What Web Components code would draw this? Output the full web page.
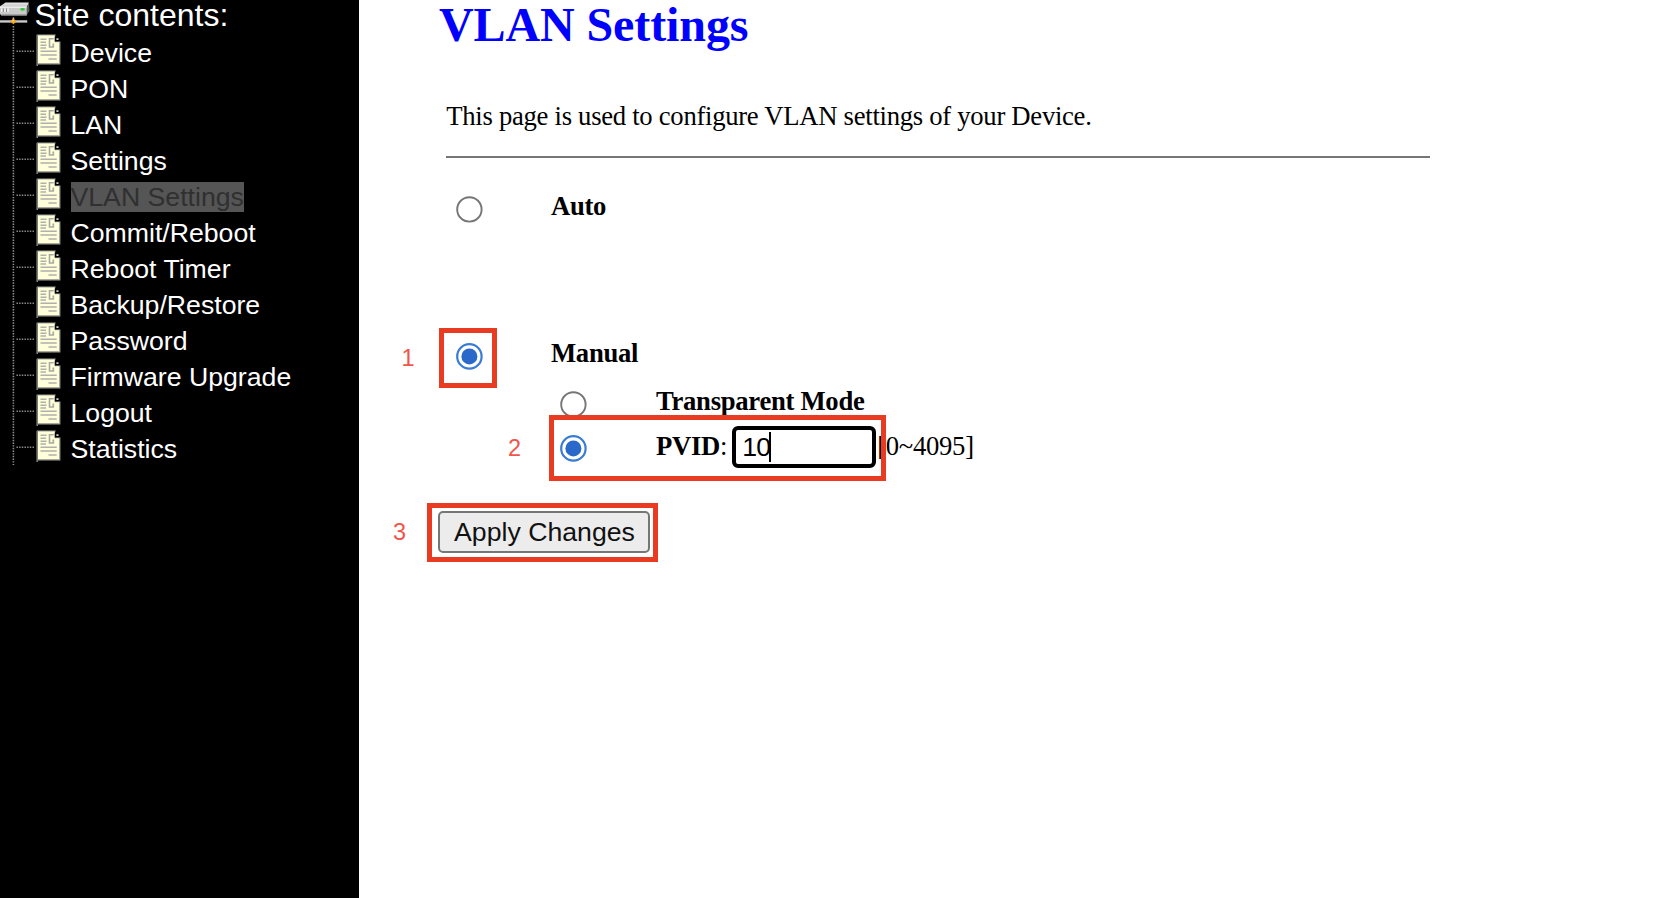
<!DOCTYPE html>
<html lang="en">
<head>
<meta charset="utf-8">
<title>VLAN Settings</title>
<style>
    html, body {
        margin: 0;
        height: 100%;
        overflow: hidden;
        background: #fff;
    }
</style>
</head>
<body>
<device-page></device-page>

<script>
class TreeItem extends HTMLElement {
    connectedCallback() {
        this.attachShadow({ mode: 'open' });
        this.shadowRoot.innerHTML = `
            <style>
                :host {
                    display: flex;
                    height: 36px;
                    line-height: 36px;
                    font-size: 26.67px;
                    white-space: nowrap;
                }

                svg {
                    flex: none;
                    width: 70.5px;
                    height: 36px;
                    overflow: visible;
                }

                :host([active]) span {
                    background: #555;
                    color: #303030;
                }
            </style>
            <svg viewBox="0 0 70.5 36">
                <path d="M16.5 16.3H35" fill="none" stroke="#909090" stroke-width="1.6" stroke-dasharray="1.4 1.27"/>
                <path d="M37.3 31V0H55.2V6.6H59.8V28.8H37.3" fill="#ffffd9" stroke="#a0a09c" stroke-width="1.2"/>
                <path d="M37.2 0V30.8" stroke="#77776f" stroke-width="1.3"/>
                <path d="M55.8-.8L60.8 5V6.4H54.8V2.5Z" fill="#000"/>
                <path d="M56.4 4.1H58.5" stroke="#e5e5d8" stroke-width="1.6"/>
                <path d="M40.5 4.2H46.5M40.5 7.2H46M40.5 10.2H46.5M40.5 13H46M40.5 16.2H56.7M40.5 20H56.7M48.5 24H56.7" stroke="#b0b0ac" stroke-width="1.6"/>
                <path d="M53.7 3.8H49.5V12H53.3V8.5" fill="none" stroke="#a9a9a4" stroke-width="1.6"/>
            </svg>
            <div><span><slot></slot></span></div>
        `;
    }
}

class SiteTree extends HTMLElement {
    connectedCallback() {
        this.attachShadow({ mode: 'open' });
        this.shadowRoot.innerHTML = `
            <style>
                :host {
                    display: block;
                    position: relative;
                    flex: none;
                    width: 358.6px;
                    background: #000;
                    color: #fff;
                    font-family: "Liberation Sans", Arial, sans-serif;
                }

                .root {
                    display: flex;
                    height: 35px;
                    line-height: 31px;
                    font-size: 32px;
                    white-space: nowrap;
                }

                .root svg {
                    flex: none;
                    width: 34.4px;
                    height: 35px;
                }

                .trunk {
                    position: absolute;
                    left: 0;
                    top: 0;
                    width: 20px;
                    height: 466px;
                }
            </style>
            <svg class="trunk" viewBox="0 0 20 466">
                <path d="M13.4 26V465" stroke="#909090" stroke-width="1.6" stroke-dasharray="1.4 1.27"/>
            </svg>
            <div class="root">
                <svg viewBox="0 0 34.4 35">
                    <defs>
                        <linearGradient id="top" x1="0" x2="0" y1="0" y2="1">
                            <stop offset="0" stop-color="#e6e6e6"/>
                            <stop offset="1" stop-color="#bdbdbd"/>
                        </linearGradient>
                    </defs>
                    <path d="M5.5 2.6H29L26.6 8H0V6.2Z" fill="url(#top)"/>
                    <path d="M29 2.6L29.4 11L26.6 15.6V8Z" fill="#5a5a5a"/>
                    <path d="M0 7.4H26.8V15.5H1.5L0 14Z" fill="#c9c9c9"/>
                    <path d="M0 7.2H26.5" stroke="#f4f4f4" stroke-width="1.2"/>
                    <path d="M1.5 15.2H26.5" stroke="#777" stroke-width="1.3"/>
                    <path d="M1.8 8.5V12M5 8.5V12M8 8.5V12" stroke="#f5f5f5" stroke-width="1.5"/>
                    <path d="M3.3 8.5V12M6.5 8.5V12" stroke="#888"/>
                    <ellipse cx="22.6" cy="9.3" rx="2.4" ry="1.4" fill="#31c735"/>
                    <path d="M0 21.6H27.3" stroke="#b6b6b6" stroke-width="2.2"/>
                    <path d="M0 21H27" stroke="#ededed" stroke-width=".8"/>
                    <path d="M13.4 17.5V20" stroke="#ccc" stroke-width="1.6"/>
                    <path d="M13.4 18.6L16.7 21.5L13.4 24.2L10.2 21.5Z" fill="#f2a21b"/>
                    <path d="M11.6 21.2L13.4 19.5L14.5 21.2Z" fill="#ffe08a"/>
                </svg>
                <div>Site contents:</div>
            </div>
            <slot></slot>
        `;
    }
}

class RadioMark extends HTMLElement {
    connectedCallback() {
        this.attachShadow({ mode: 'open' });
        this.shadowRoot.innerHTML = `
            <style>
                :host {
                    display: block;
                    flex: none;
                    width: 27px;
                    height: 27px;
                }

                svg {
                    display: block;
                }

                circle {
                    fill: none;
                    stroke: #767676;
                    stroke-width: 1.9;
                }

                .dot {
                    display: none;
                }

                :host([checked]) circle {
                    stroke: #3a7bd5;
                    stroke-width: 2.2;
                }

                :host([checked]) .dot {
                    display: block;
                    fill: #2a69c9;
                    stroke: none;
                }
            </style>
            <svg width="27" height="27" viewBox="0 0 27 27">
                <circle cx="13.4" cy="13.4" r="12.2"/>
                <circle class="dot" cx="13.4" cy="13.4" r="8"/>
            </svg>
        `;
    }
}

class OptionRow extends HTMLElement {
    connectedCallback() {
        this.attachShadow({ mode: 'open' });
        this.shadowRoot.innerHTML = `
            <style>
                :host {
                    display: flex;
                    align-items: flex-start;
                    box-sizing: border-box;
                    white-space: nowrap;
                }

                radio-mark {
                    margin-top: var(--radio-drop, 8px);
                }

                .label {
                    display: flex;
                    line-height: 36px;
                }
            </style>
            <radio-mark ${this.hasAttribute('checked') ? 'checked' : ''}></radio-mark>
            <div class="label"><slot></slot></div>
        `;
        this.shadowRoot.querySelector('.label').style.marginLeft = this.getAttribute('gap') + 'px';
    }
}

class TextField extends HTMLElement {
    connectedCallback() {
        this.attachShadow({ mode: 'open' });
        this.shadowRoot.innerHTML = `
            <style>
                :host {
                    display: flex;
                    align-items: center;
                    box-sizing: border-box;
                    width: 144px;
                    height: 42px;
                    padding-left: 6px;
                    border: 4px solid #000;
                    border-radius: 6px;
                    background: #fff;
                    font: 26.67px/34px "Liberation Sans", Arial, sans-serif;
                    letter-spacing: -.8px;
                }

                .caret {
                    width: 2px;
                    height: 30px;
                    margin-left: -1.5px;
                    background: #000;
                }
            </style>
            <slot></slot><span class="caret"></span>
        `;
    }
}

class PushButton extends HTMLElement {
    connectedCallback() {
        this.attachShadow({ mode: 'open' });
        this.shadowRoot.innerHTML = `
            <style>
                :host {
                    display: block;
                }

                button {
                    display: block;
                    box-sizing: border-box;
                    width: 212px;
                    height: 42px;
                    padding: 0;
                    border: 2px solid #767676;
                    border-radius: 5px;
                    background: #ececec;
                    color: #111;
                    font: 26.67px/38px "Liberation Sans", Arial, sans-serif;
                    white-space: nowrap;
                }
            </style>
            <button><slot></slot></button>
        `;
    }
}

// Red frame with a step number to its left, laid over the form
class StepMark extends HTMLElement {
    connectedCallback() {
        const [x, y, w, h] = this.getAttribute('frame').split(' ');
        const [nx, ny] = this.getAttribute('label').split(' ');
        this.attachShadow({ mode: 'open' });
        this.shadowRoot.innerHTML = `
            <style>
                .frame {
                    position: absolute;
                    left: ${x}px;
                    top: ${y}px;
                    width: ${w}px;
                    height: ${h}px;
                    box-sizing: border-box;
                    border: 5px solid #e93a22;
                }

                .num {
                    position: absolute;
                    left: ${nx}px;
                    top: ${ny}px;
                    color: #f0554a;
                    font: 23.5px/28px "Liberation Sans", Helvetica, sans-serif;
                }
            </style>
            <div class="frame"></div>
            <div class="num"><slot></slot></div>
        `;
    }
}

class VlanForm extends HTMLElement {
    connectedCallback() {
        this.attachShadow({ mode: 'open' });
        this.shadowRoot.innerHTML = `
            <style>
                :host {
                    display: block;
                    flex: 1;
                    padding-left: 80.4px;
                    color: #000;
                    font: 26.67px "Liberation Serif", "Times New Roman", serif;
                    letter-spacing: -.28px;
                }

                h1 {
                    margin: 0;
                    height: 98px;
                    line-height: 50px;
                    font-size: 48px;
                    letter-spacing: -.1px;
                    color: #00f;
                    white-space: nowrap;
                }

                p {
                    margin: 0 0 0 7.3px;
                    height: 58px;
                    line-height: 36px;
                    white-space: nowrap;
                }

                hr {
                    width: 984px;
                    height: 2px;
                    margin: 0 0 0 7px;
                    border: 0;
                    background: #777;
                }

                .top {
                    margin-left: 17px;
                }

                .sub {
                    margin-left: 121px;
                }

                .auto {
                    height: 177px;
                    padding-top: 30px;
                }

                .manual {
                    height: 48px;
                }

                .transparent {
                    height: 45px;
                }

                .pvid {
                    --radio-drop: 7px;
                    height: 83px;
                }

                .colon {
                    margin-right: 5px;
                }

                .range {
                    margin-left: 1px;
                }

                text-field {
                    margin-top: -2px;
                }

                push-button {
                    margin-left: -.5px;
                    letter-spacing: 0;
                }
            </style>
            <h1>VLAN Settings</h1>
            <p>This page is used to configure VLAN settings of your Device.</p>
            <hr>
            <option-row class="top auto" gap="68"><b>Auto</b></option-row>
            <option-row class="top manual" gap="68" checked><b>Manual</b></option-row>
            <option-row class="sub transparent" gap="69"><b>Transparent Mode</b></option-row>
            <option-row class="sub pvid" gap="69" checked>
                <b>PVID</b><span class="colon">:</span>
                <text-field>10</text-field>
                <span class="range">[0~4095]</span>
            </option-row>
            <push-button>Apply Changes</push-button>
        `;
    }
}

class DevicePage extends HTMLElement {
    connectedCallback() {
        this.attachShadow({ mode: 'open' });
        this.shadowRoot.innerHTML = `
            <style>
                :host {
                    display: flex;
                    position: relative;
                    height: 100vh;
                }
            </style>
            <site-tree>
                <tree-item>Device</tree-item>
                <tree-item>PON</tree-item>
                <tree-item>LAN</tree-item>
                <tree-item>Settings</tree-item>
                <tree-item active>VLAN Settings</tree-item>
                <tree-item>Commit/Reboot</tree-item>
                <tree-item>Reboot Timer</tree-item>
                <tree-item>Backup/Restore</tree-item>
                <tree-item>Password</tree-item>
                <tree-item>Firmware Upgrade</tree-item>
                <tree-item>Logout</tree-item>
                <tree-item>Statistics</tree-item>
            </site-tree>
            <vlan-form></vlan-form>
            <step-mark frame="439 328 58 60" label="401.5 344">1</step-mark>
            <step-mark frame="549 415 337 66" label="508 434">2</step-mark>
            <step-mark frame="427 503 231 59" label="393 518">3</step-mark>
        `;
    }
}

customElements.define('tree-item', TreeItem);
customElements.define('site-tree', SiteTree);
customElements.define('radio-mark', RadioMark);
customElements.define('option-row', OptionRow);
customElements.define('text-field', TextField);
customElements.define('push-button', PushButton);
customElements.define('step-mark', StepMark);
customElements.define('vlan-form', VlanForm);
customElements.define('device-page', DevicePage);
</script>
</body>
</html>
